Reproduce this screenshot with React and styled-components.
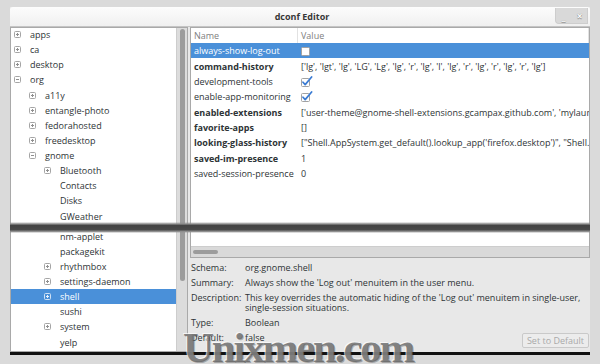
import React from "react";
import styled, { createGlobalStyle } from "styled-components";

const Global = createGlobalStyle`
  html, body { margin: 0; padding: 0; background: #dadada; overflow: hidden; }
  body { font-family: "Open Sans", "Noto Sans", sans-serif; font-size: 9px; color: #2e3436; }
`;

const Page = styled.div`
  position: relative;
  width: 600px;
  height: 364px;
  box-sizing: border-box;
  padding: 7px 0 0 10px;
  overflow: hidden;
`;

const Window = styled.div`
  position: relative;
  width: 580px;
  display: flex;
  flex-direction: column;
  background: #e8e8e8;
  border-bottom: 3px solid #111;
`;

const TitleBar = styled.div`
  height: 19px;
  display: grid;
  grid-template-columns: 1fr auto 1fr;
  align-items: center;
  background: linear-gradient(#fcfcfc, #f0f0f0);
  border-bottom: 1px solid #c4c4c4;
  border-radius: 3px 3px 0 0;
`;

const Title = styled.div`
  grid-column: 2;
  font-weight: 700;
  font-size: 9px;
  color: #383838;
  padding-left: 4px;
`;

const WinButtons = styled.div`
  justify-self: end;
  align-self: start;
  display: flex;
  gap: 1px;
  margin: 1px 2px 0 0;
  background: #d9d9d9;
  border: 1px solid #cdcdcd;
  border-top: none;
  border-radius: 0 0 0 4px;
`;

const WinButton = styled.div`
  width: 15px;
  height: 15px;
  box-sizing: border-box;
  display: flex;
  align-items: center;
  justify-content: center;
  color: #ffffff;
  font-size: 10px;
  font-weight: 700;
  text-shadow: 0 0 1px #7a7a7a, 0 1px 0 #9a9a9a;
  line-height: 1;
`;

const Body = styled.div`
  display: flex;
  gap: 2px;
  height: 325px;
`;

const TreeFrame = styled.div`
  width: 178px;
  flex: none;
  box-sizing: border-box;
  border: 1px solid #a9a9a9;
  background: #fff;
  display: flex;
`;

const TreeList = styled.div`
  flex: 1;
  min-width: 0;
  margin-top: -1px;
`;

const TreeRow = styled.div`
  height: 15.14px;
  display: flex;
  align-items: center;
  padding-left: ${(p) => 3 + p.$level * 15}px;
  margin-bottom: ${(p) => (p.$cut ? 5 : 0)}px;
  background: ${(p) => (p.$sel ? "#4a90d9" : "transparent")};
  color: ${(p) => (p.$sel ? "#fff" : "#2e3436")};
  white-space: nowrap;
`;

const ExpSlot = styled.span`
  width: 16px;
  flex: none;
  display: flex;
  align-items: center;
`;

const VScroll = styled.div`
  width: 10px;
  flex: none;
  background: #dcdcdc;
  border-left: 1px solid #cdcdcd;
  display: flex;
  justify-content: center;
`;

const VThumb = styled.div`
  width: 5px;
  height: 252px;
  margin-top: 1px;
  background: #9c9c9c;
  border-radius: 3px;
`;

const RightCol = styled.div`
  width: 400px;
  flex: none;
  display: flex;
  flex-direction: column;
`;

const ListFrame = styled.div`
  height: 231px;
  flex: none;
  box-sizing: border-box;
  border: 1px solid #a9a9a9;
  background: #fff;
  display: flex;
  flex-direction: column;
`;

const Header = styled.div`
  height: 15px;
  flex: none;
  display: flex;
  align-items: center;
  color: #808080;
`;

const HeadCell = styled.div`
  box-sizing: border-box;
  height: 100%;
  display: flex;
  align-items: center;
  padding-left: 3px;
  width: ${(p) => (p.$w ? `${p.$w}px` : "auto")};
  flex: ${(p) => (p.$w ? "none" : "1")};
  border-right: 1px solid #e2e2e2;
`;

const Rows = styled.div`
  flex: 1;
  overflow: hidden;
`;

const KeyRow = styled.div`
  height: 15.375px;
  display: flex;
  align-items: center;
  background: ${(p) => (p.$sel ? "#4a90d9" : "transparent")};
  color: ${(p) => (p.$sel ? "#fff" : "#2e3436")};
  white-space: nowrap;
`;

const NameCell = styled.div`
  width: 107px;
  flex: none;
  box-sizing: border-box;
  padding-left: 3px;
  font-weight: ${(p) => (p.$bold ? 700 : 400)};
  overflow: hidden;
`;

const ValueCell = styled.div`
  flex: 1;
  min-width: 0;
  padding-left: 3px;
  overflow: hidden;
  display: flex;
  align-items: center;
`;

const HScroll = styled.div`
  height: 10px;
  flex: none;
  background: #d9d9d9;
  border-top: 1px solid #cdcdcd;
  display: flex;
  align-items: center;
  padding-left: 2px;
`;

const HThumb = styled.div`
  width: 25px;
  height: 4px;
  background: #9c9c9c;
  border-radius: 3px;
`;

const Info = styled.div`
  flex: 1;
  display: grid;
  grid-template-columns: 54px 1fr auto;
  row-gap: 5px;
  align-content: start;
  padding: 5px 1px 0 1px;
  line-height: 10px;
  color: #2e3436;
`;

const Label = styled.div`
  grid-column: 1;
`;

const Val = styled.div`
  grid-column: ${(p) => (p.$narrow ? "2" : "2 / 4")};
  white-space: nowrap;
`;

const Line = styled.span`
  display: block;
`;

const DefaultButton = styled.div`
  grid-column: 3;
  align-self: start;
  width: 67px;
  height: 15px;
  box-sizing: border-box;
  border: 1px solid #c9c9c9;
  border-radius: 2px;
  background: #ececec;
  color: #a9a9a9;
  display: flex;
  align-items: center;
  justify-content: center;
  line-height: 1;
`;

const Band = styled.div`
  position: absolute;
  left: 0;
  top: 215px;
  width: 100%;
  height: 11px;
  background: linear-gradient(
    to bottom,
    rgba(120, 120, 120, 0) 0%,
    #8a8a8a 18%,
    #434343 32%,
    #4a4a4a 70%,
    #8d8d8d 86%,
    rgba(120, 120, 120, 0) 100%
  );
`;

const Watermark = styled.div`
  position: absolute;
  left: 183px;
  top: 326px;
  font-family: "Liberation Serif", "DejaVu Serif", serif;
  font-weight: 700;
  font-size: 43px;
  line-height: 1;
  letter-spacing: -2.2px;
  color: rgba(100, 100, 100, 0.78);
  text-shadow: -1px -1px 0 rgba(255, 255, 255, 0.7), 1px 1px 0 rgba(0, 0, 0, 0.25);
  white-space: nowrap;
`;

const Expander = ({ open, sel }) => {
  const c = sel ? "#eaf2fb" : "#8f8f8f";
  return (
    <svg width="7" height="7" viewBox="0 0 7 7">
      <rect x="0.5" y="0.5" width="6" height="6" rx="1" fill={sel ? "none" : "#fff"} stroke={sel ? "#cfe0f4" : "#a5a5a5"} />
      <line x1="2" y1="3.5" x2="5" y2="3.5" stroke={c} />
      {!open && <line x1="3.5" y1="2" x2="3.5" y2="5" stroke={c} />}
    </svg>
  );
};

const Check = ({ on }) => (
  <svg width="12" height="11" viewBox="0 0 12 11">
    <rect x="0.5" y="2.5" width="8" height="8" rx="1" fill="#fff" stroke="#a2a2a2" />
    {on && (
      <path d="M2 6.2 L4.2 8.6 L10.6 1" fill="none" stroke="#3a7bd3" strokeWidth="1.7" strokeLinecap="round" strokeLinejoin="round" />
    )}
  </svg>
);

const tree = [
  { l: 0, t: "apps", e: "+" },
  { l: 0, t: "ca", e: "+" },
  { l: 0, t: "desktop", e: "+" },
  { l: 0, t: "org", e: "-" },
  { l: 1, t: "a11y", e: "+" },
  { l: 1, t: "entangle-photo", e: "+" },
  { l: 1, t: "fedorahosted", e: "+" },
  { l: 1, t: "freedesktop", e: "+" },
  { l: 1, t: "gnome", e: "-" },
  { l: 2, t: "Bluetooth", e: "+" },
  { l: 2, t: "Contacts" },
  { l: 2, t: "Disks" },
  { l: 2, t: "GWeather", cut: true },
  { l: 2, t: "nm-applet" },
  { l: 2, t: "packagekit" },
  { l: 2, t: "rhythmbox", e: "+" },
  { l: 2, t: "settings-daemon", e: "+" },
  { l: 2, t: "shell", e: "+", sel: true },
  { l: 2, t: "sushi" },
  { l: 2, t: "system", e: "+" },
  { l: 2, t: "yelp" },
];

const keys = [
  { n: "always-show-log-out", check: false, sel: true },
  { n: "command-history", b: true, v: "['lg', 'lgt', 'lg', 'LG', 'Lg', 'lg', 'r', 'lg', 'l', 'lg', 'r', 'lg', 'r', 'lg', 'r', 'lg']" },
  { n: "development-tools", check: true },
  { n: "enable-app-monitoring", check: true },
  { n: "enabled-extensions", b: true, v: "['user-theme@gnome-shell-extensions.gcampax.github.com', 'mylauncher@hardpixel.github.com']" },
  { n: "favorite-apps", b: true, v: "[]" },
  { n: "looking-glass-history", b: true, v: "[\"Shell.AppSystem.get_default().lookup_app('firefox.desktop')\", \"Shell.AppSystem.get_default()\"]" },
  { n: "saved-im-presence", b: true, v: "1" },
  { n: "saved-session-presence", v: "0" },
];

export default function App() {
  return (
    <>
      <Global />
      <Page>
        <Window>
          <TitleBar>
            <Title>dconf Editor</Title>
            <WinButtons>
              <WinButton>_</WinButton>
              <WinButton>×</WinButton>
            </WinButtons>
          </TitleBar>
          <Body>
            <TreeFrame>
              <TreeList>
                {tree.map((r) => (
                  <TreeRow key={r.t} $level={r.l} $sel={r.sel} $cut={r.cut}>
                    <ExpSlot>{r.e && <Expander open={r.e === "-"} sel={r.sel} />}</ExpSlot>
                    {r.t}
                  </TreeRow>
                ))}
              </TreeList>
              <VScroll>
                <VThumb />
              </VScroll>
            </TreeFrame>
            <RightCol>
              <ListFrame>
                <Header>
                  <HeadCell $w={107}>Name</HeadCell>
                  <HeadCell>Value</HeadCell>
                </Header>
                <Rows>
                  {keys.map((k) => (
                    <KeyRow key={k.n} $sel={k.sel}>
                      <NameCell $bold={k.b}>{k.n}</NameCell>
                      <ValueCell>{k.check !== undefined ? <Check on={k.check} /> : k.v}</ValueCell>
                    </KeyRow>
                  ))}
                </Rows>
                <HScroll>
                  <HThumb />
                </HScroll>
              </ListFrame>
              <Info>
                <Label>Schema:</Label>
                <Val>org.gnome.shell</Val>
                <Label>Summary:</Label>
                <Val>Always show the 'Log out' menuitem in the user menu.</Val>
                <Label>Description:</Label>
                <Val>
                  <Line>This key overrides the automatic hiding of the 'Log out' menuitem in single-user,</Line>
                  <Line>single-session situations.</Line>
                </Val>
                <Label>Type:</Label>
                <Val>Boolean</Val>
                <Label>Default:</Label>
                <Val $narrow>false</Val>
                <DefaultButton>Set to Default</DefaultButton>
              </Info>
            </RightCol>
          </Body>
          <Band />
        </Window>
        <Watermark>Unixmen.com</Watermark>
      </Page>
    </>
  );
}
